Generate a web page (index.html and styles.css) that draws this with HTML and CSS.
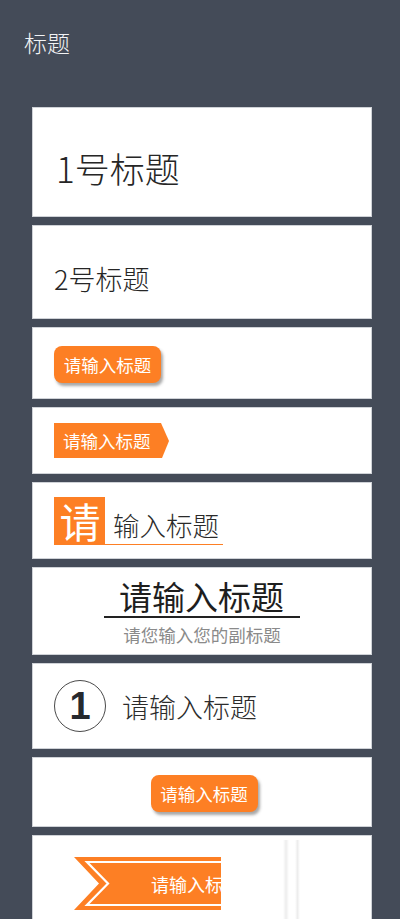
FILE: index.html
```html
<!DOCTYPE html>
<html lang="zh">
<head>
<meta charset="utf-8">
<title>标题</title>
<link rel="stylesheet" href="styles.css">
</head>
<body>
<header class="top">标题</header>
<main class="list">
  <section class="card c1"><span class="h1">1号标题</span></section>
  <section class="card c2"><span class="h2">2号标题</span></section>
  <section class="card c3"><span class="pill">请输入标题</span></section>
  <section class="card c4"><span class="tag">请输入标题</span></section>
  <section class="card c5"><span class="sq">请</span><span class="rest">输入标题</span></section>
  <section class="card c6">
    <span class="big">请输入标题</span>
    <span class="sub">请您输入您的副标题</span>
  </section>
  <section class="card c7"><span class="circ">1</span><span class="t7">请输入标题</span></section>
  <section class="card c8"><span class="pill">请输入标题</span></section>
  <section class="card c9">
    <div class="ribbon">
      <svg class="rib-bg" width="147" height="53" viewBox="0 0 147 53">
        <polygon points="0,0 147,0 147,53 0,53 25,26.5" fill="#fd7f24"/>
        <polyline points="147,5 13,5 34,26.5 13,48 147,48" fill="none" stroke="#ffffff" stroke-width="2.2"/>
      </svg>
      <span class="rib-text">请输入标题</span>
    </div>
    <div class="bars"><span class="bar b1"></span><span class="bar b2"></span></div>
  </section>
</main>
</body>
</html>
```
FILE: styles.css
```css
html, body {
  margin: 0;
  padding: 0;
}
body {
  background: #444b58;
  font-family: "Noto Sans CJK SC", "Noto Sans", sans-serif;
  font-weight: 300;
  width: 400px;
  height: 919px;
  overflow: hidden;
}
.top {
  height: 86px;
  box-sizing: border-box;
  padding-left: 24px;
  padding-top: 27px;
  font-size: 23px;
  line-height: 30px;
  color: #f2f3f5;
}
.list {
  display: flex;
  flex-direction: column;
  gap: 8px;
  padding: 21px 28px 0 32px;
}
.card {
  box-sizing: border-box;
  background: #ffffff;
  border: 1px solid #cfd2d7;
  width: 340px;
  display: flex;
  align-items: center;
  padding-left: 21px;
  color: #262626;
  position: relative;
}
.c1 { height: 110px; }
.c2 { height: 94px; }
.c3 { height: 72px; }
.c4 { height: 67px; }
.c5 { height: 77px; }
.c6 { height: 88px; }
.c7 { height: 86px; }
.c8 { height: 70px; }
.c9 { height: 100px; align-items: flex-start; }

.h1 {
  font-size: 35px;
  line-height: 1;
  padding-left: 2px;
  margin-top: 10px;
}
.h2 {
  font-size: 27px;
  line-height: 1;
  margin-top: 13px;
}
.pill {
  display: inline-flex;
  align-items: center;
  justify-content: center;
  width: 107px;
  height: 37px;
  border-radius: 8px;
  background: #fd7f24;
  color: #ffffff;
  font-size: 17.5px;
  font-weight: 400;
  box-shadow: 2px 3px 3px rgba(60, 60, 60, 0.45);
}
.c3 .pill { margin-top: 2px; }
.tag {
  display: inline-flex;
  align-items: center;
  width: 115px;
  height: 35px;
  box-sizing: border-box;
  padding-left: 9px;
  background: #fd7f24;
  color: #ffffff;
  font-size: 17.5px;
  font-weight: 400;
  clip-path: polygon(0 0, 107px 0, 115px 18px, 108px 35px, 0 35px);
  margin-top: 0;
}
.c5 {
  align-items: flex-end;
  padding-bottom: 13px;
}
.sq {
  width: 51px;
  height: 48px;
  background: #fd7f24;
  color: #ffffff;
  font-size: 41px;
  font-weight: 400;
  line-height: 46px;
  text-align: center;
  box-sizing: border-box;
  padding-left: 1px;
}
.rest {
  font-size: 26.5px;
  line-height: 1;
  padding: 0 4px 6px 8px;
  border-bottom: 1px solid #fd7f24;
  color: #2a2a2a;
}
.c6 {
  flex-direction: column;
  align-items: center;
  justify-content: flex-start;
  padding-left: 0;
  padding-top: 12px;
}
.big {
  font-size: 33px;
  font-weight: 400;
  line-height: 1;
  padding: 0 16px 3px 15px;
  border-bottom: 2px solid #222222;
  color: #1e1e1e;
}
.sub {
  font-size: 17.5px;
  font-weight: 400;
  line-height: 1;
  margin-top: 8px;
  color: #8a8a8a;
}
.circ {
  width: 50px;
  height: 50px;
  border: 1.6px solid #4a4a4a;
  border-radius: 50%;
  display: flex;
  align-items: center;
  justify-content: center;
  font-family: "Liberation Sans", Arial, sans-serif;
  font-weight: bold;
  font-size: 38px;
  color: #26292e;
  margin-top: 0;
}
.t7 {
  font-size: 27px;
  line-height: 1;
  margin-left: 16px;
  color: #2c2c2c;
}
.c8 {
  justify-content: center;
  padding-left: 0;
  align-items: flex-start;
  padding-top: 17px;
}
.c8 .pill { margin-left: 4px; height: 37px; }
.ribbon {
  position: relative;
  width: 147px;
  height: 53px;
  margin-left: 20px;
  margin-top: 21px;
  overflow: hidden;
  display: flex;
  align-items: center;
}
.rib-bg {
  position: absolute;
  left: 0;
  top: 0;
}
.rib-text {
  position: relative;
  white-space: nowrap;
  padding-left: 77px;
  font-size: 18px;
  font-weight: 400;
  color: #ffffff;
  line-height: 1;
  margin-top: 1px;
}
.bars {
  position: absolute;
  left: 250px;
  top: 4px;
  display: flex;
  gap: 6px;
}
.bar {
  display: block;
  width: 6px;
  height: 90px;
  background: linear-gradient(to right, #ffffff, #ededed 50%, #ffffff);
}
.b2 { width: 5px; }
```
